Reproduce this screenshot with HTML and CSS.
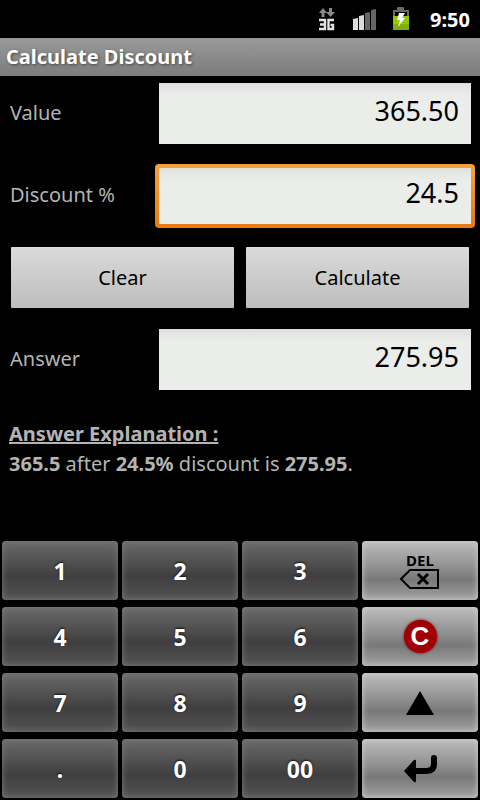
FILE: index.html
```html
<!DOCTYPE html>
<html lang="en">
<head>
    <meta charset="UTF-8">
    <meta name="viewport" content="width=device-width, initial-scale=1.0">
    <title>Calculate Discount</title>
    <link rel="stylesheet" href="styles.css">
</head>
<body>
    <div class="status-bar">
        <svg class="icon-3g" width="18" height="24" viewBox="0 0 18 24" aria-label="3G">
            <path fill="#8a8a8a" d="M1 6 L5 1 L9 6 H6.500 V10 H3.500 V6 Z M8 5 H11 V1 H14 V5 H17 L12.500 10 Z"/>
            <path fill="none" stroke="#e4e4e4" stroke-width="2.400" d="M1 13 H7 V22 H1 M2 17.500 H7 M16 13 H10.500 V22 H15 V18 H12.500"/>
        </svg>
        <svg class="icon-signal" width="26" height="24" viewBox="0 0 26 24" aria-label="Signal">
            <path fill="#dcdcdc" d="M1 12 L6 11 V23 H1 Z M7 9 L12 8 V23 H7 Z"/>
            <path fill="#666" d="M13 6 L18 5 V23 H13 Z M19 3 L24 2 V23 H19 Z"/>
        </svg>
        <svg class="icon-battery" width="18" height="24" viewBox="0 0 18 24" aria-label="Battery charging">
            <path fill="#686868" d="M1 3 H5 V1 Q5 0 6 0 H11 Q12 0 12 1 V3 H17 V10 H15 V5 H3 V10 H1 Z"/>
            <path fill="#93c800" d="M1 9 H17 V22 Q17 23 16 23 H2 Q1 23 1 22 Z"/>
            <path fill="#7db300" d="M1 17 H17 V22 Q17 23 16 23 H2 Q1 23 1 22 Z"/>
            <path fill="#fff" d="M7 6 H13 L10 11 H13 L6 20 L8 13 H5 Z"/>
        </svg>
        <span class="clock">9:50</span>
    </div>

    <header>
        <h1>Calculate Discount</h1>
    </header>

    <form id="discount-form">
        <div class="row">
            <label for="value">Value</label>
            <input type="text" id="value" value="365.50">
        </div>
        <div class="row">
            <label for="discount">Discount %</label>
            <input type="text" id="discount" class="active" value="24.5">
        </div>
        <div class="buttons">
            <button type="button" class="form-btn">Clear</button>
            <button type="button" class="form-btn">Calculate</button>
        </div>
        <div class="row">
            <label for="answer">Answer</label>
            <input type="text" id="answer" value="275.95" readonly>
        </div>
    </form>

    <div class="explanation">
        <h2>Answer Explanation :</h2>
        <p><strong>365.5</strong> after <strong>24.5%</strong> discount is <strong>275.95</strong>.</p>
    </div>

    <div class="keypad">
        <button type="button" class="key">1</button>
        <button type="button" class="key">2</button>
        <button type="button" class="key">3</button>
        <button type="button" class="key light del">
            <span>DEL</span>
            <svg width="42" height="22" viewBox="0 0 42 22">
                <path fill="none" stroke="#000" stroke-width="2" d="M2 11 L11 2 H39 V20 H11 Z"/>
                <path fill="none" stroke="#000" stroke-width="3" d="M19 6 L29 16 M29 6 L19 16"/>
            </svg>
        </button>
        <button type="button" class="key">4</button>
        <button type="button" class="key">5</button>
        <button type="button" class="key">6</button>
        <button type="button" class="key light"><span class="clear-icon">C</span></button>
        <button type="button" class="key">7</button>
        <button type="button" class="key">8</button>
        <button type="button" class="key">9</button>
        <button type="button" class="key light" aria-label="Up">
            <svg width="28" height="24" viewBox="0 0 28 24">
                <path d="M14 0 L28 24 H0 Z"/>
            </svg>
        </button>
        <button type="button" class="key">.</button>
        <button type="button" class="key">0</button>
        <button type="button" class="key">00</button>
        <button type="button" class="key light" aria-label="Enter">
            <svg width="34" height="28" viewBox="0 0 34 28">
                <path d="M1 16 L11 5 Q13 4 13 6 V26 Q13 28 11 27 Z"/>
                <path fill="none" stroke="#000" stroke-width="6" stroke-linecap="round" d="M12 16 H23 Q31 16 31 9 V3"/>
            </svg>
        </button>
    </div>
</body>
</html>
```

FILE: styles.css
```css
* {
    box-sizing: border-box;
}
body {
    font-family: "Noto Sans", "Open Sans", sans-serif;
    margin: 0;
    min-height: 100vh;
    display: flex;
    flex-direction: column;
    background-color: #000;
    color: #b4b4b4;
}
input, button {
    font-family: inherit;
}
.status-bar {
    display: flex;
    justify-content: flex-end;
    align-items: center;
    height: 38px;
    padding-right: 10px;
}
.icon-signal {
    margin-left: 16px;
}
.icon-battery {
    margin-left: 14px;
}
.clock {
    margin-left: 20px;
    color: #fff;
    font-size: 20px;
    font-weight: bold;
}
header {
    height: 38px;
    padding: 0 6px;
    background: linear-gradient(#999, #7c7c7c);
}
h1 {
    margin: 0;
    color: #fff;
    font-size: 20px;
    line-height: 37px;
    text-shadow: 1px 1px 3px #444;
}
form {
    display: flex;
    flex-direction: column;
    gap: 21px;
    padding: 7px 5px 0;
}
.row {
    display: flex;
    align-items: center;
    height: 61px;
}
.row label {
    width: 150px;
    padding: 0 0 3px 5px;
    font-size: 20px;
}
.row input {
    flex: 1;
    min-width: 0;
    height: 61px;
    padding: 0 12px 7px;
    border: 0 solid transparent;
    border-width: 0 4px;
    outline: none;
    background: linear-gradient(#dfdfdf, #ebedea 12px) padding-box;
    color: #000;
    font-size: 27px;
    text-align: right;
}
.row input.active {
    height: 64px;
    border-width: 4px;
    border-radius: 4px;
    background: linear-gradient(#dfe1de, #ebedea 12px) padding-box, linear-gradient(#f9a13a, #e87a10) border-box;
}
.buttons {
    display: grid;
    grid-template-columns: 1fr 1fr;
    gap: 12px;
    padding: 0 6px;
}
.form-btn {
    height: 61px;
    padding: 0;
    border: none;
    border-radius: 1px;
    background: linear-gradient(#dadada, #bdbdbd);
    color: #000;
    font-size: 20px;
}
.explanation {
    padding: 29px 9px;
    font-size: 20px;
    line-height: 30px;
}
.explanation h2 {
    margin: 0;
    font-size: 20px;
    text-decoration: underline;
}
.explanation p {
    margin: 0;
}
.keypad {
    display: grid;
    grid-template-columns: repeat(4, 1fr);
    gap: 7px 4px;
    margin-top: auto;
    padding: 0 2px 2px;
}
.key {
    display: flex;
    align-items: center;
    justify-content: center;
    height: 59px;
    padding: 0;
    border: none;
    border-radius: 4px;
    background: linear-gradient(#6a6a6a, #4a4a4a 45%, #403e40 60%, #545454);
    box-shadow: inset 0 0 6px #7a7a7a;
    color: #fff;
    font-size: 23px;
    font-weight: bold;
    text-shadow: 0 -1px 2px #111;
}
.key.light {
    background: linear-gradient(#bdbdbd, #949494 40%, #787878 65%, #a2a2a2);
    box-shadow: inset 0 0 6px #ccc;
    color: #000;
    text-shadow: none;
}
.del {
    flex-direction: column;
}
.del span {
    font-size: 15px;
    line-height: 16px;
}
.clear-icon {
    width: 33px;
    height: 33px;
    border-radius: 50%;
    background-color: #a00005;
    box-shadow: 0 0 3px #700;
    color: #fff;
    font-family: "Liberation Sans", sans-serif;
    font-size: 26px;
    line-height: 33px;
}
```
